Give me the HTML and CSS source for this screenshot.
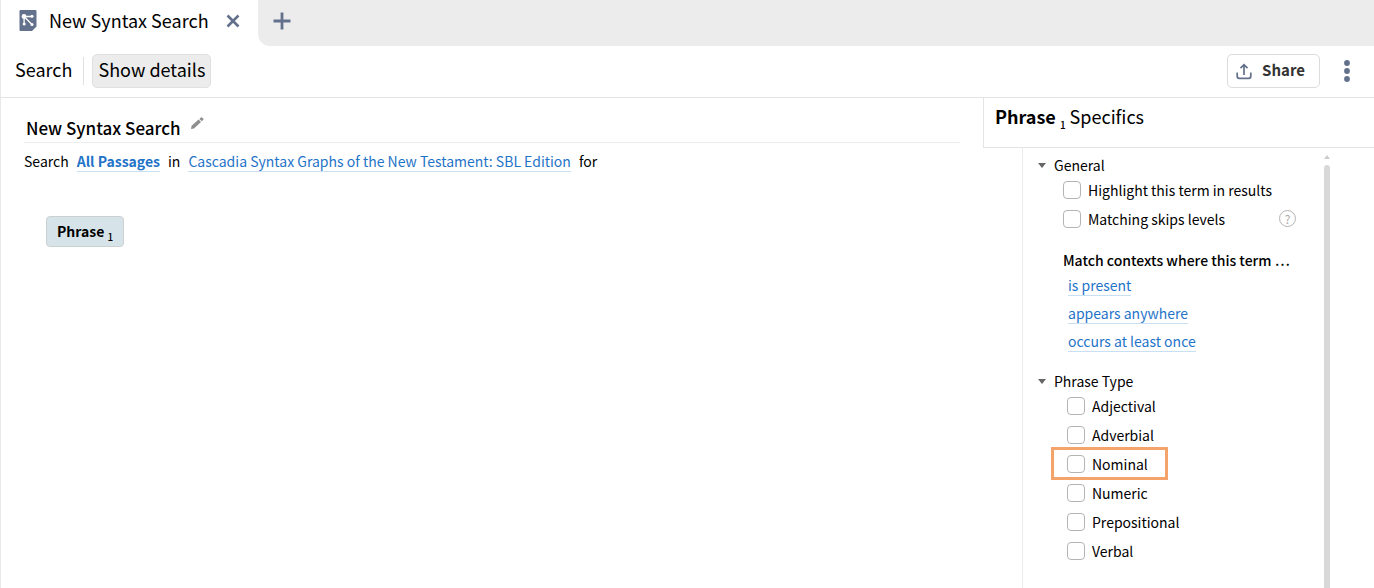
FILE: index.html
```html
<!DOCTYPE html>
<html lang="en">
<head>
  <meta charset="UTF-8">
  <meta name="viewport" content="width=device-width, initial-scale=1.0">
  <title>New Syntax Search</title>
  <link rel="stylesheet" href="styles.css">
</head>
<body>
  <header class="tabs">
    <div class="tab">
      <svg class="tab-icon" width="18" height="21" viewBox="0 0 18 21">
        <path d="M1.500 0h15a1 1 0 0 1 1 1v15.500l-4.500 4.500h-11.500a1 1 0 0 1-1-1v-19a1 1 0 0 1 1-1z" fill="#64718c"/>
        <path d="M5 6.500H13M5 6.500L5.200 14M5 6.500L13 14.500" stroke="#fff" stroke-width="1.300" fill="none"/>
        <circle cx="5" cy="6.500" r="2.400" fill="#fff"/>
        <circle cx="13" cy="6.200" r="1.500" fill="#fff"/>
        <circle cx="5.200" cy="14" r="1.500" fill="#fff"/>
        <circle cx="13" cy="14.500" r="1.500" fill="#fff"/>
      </svg>
      <span class="tab-title">New Syntax Search</span>
      <button class="icon-btn" aria-label="Close tab">
        <svg width="14" height="14" viewBox="0 0 14 14"><path d="M1.500 1.500l11 11M12.500 1.500l-11 11" stroke="#64718c" stroke-width="2.600"/></svg>
      </button>
    </div>
    <div class="tab-rest">
      <button class="icon-btn" aria-label="New tab">
        <svg width="18" height="18" viewBox="0 0 18 18"><path d="M9 .5v17M.5 9h17" stroke="#64718c" stroke-width="2.800"/></svg>
      </button>
    </div>
  </header>

  <nav class="toolbar">
    <button class="tool">Search</button>
    <button class="tool active">Show details</button>
    <button class="share">
      <svg width="16" height="18" viewBox="0 0 16 18" fill="none" stroke="#64718c" stroke-width="1.700">
        <path d="M8 13V3M4.500 6.200L8 2.700l3.500 3.500M1.200 10.500v3.800a2 2 0 0 0 2 2h9.600a2 2 0 0 0 2-2v-3.800"/>
      </svg>
      <span>Share</span>
    </button>
    <button class="icon-btn" aria-label="More">
      <svg width="6" height="22" viewBox="0 0 6 22" fill="#64718c"><circle cx="3" cy="3" r="2.900"/><circle cx="3" cy="11" r="2.900"/><circle cx="3" cy="19" r="2.900"/></svg>
    </button>
  </nav>

  <div class="panes">
    <main class="query">
      <div class="query-title">
        <h1>New Syntax Search</h1>
        <button class="icon-btn" aria-label="Rename">
          <svg width="14" height="14" viewBox="0 0 14 14" fill="#8f8f8f"><path d="M1 13l.6-3.200L8.600 3.600l2.400 2.400-7 6.400zM9.400 2.900l1.600-1.500a.8.8 0 0 1 1.100 0l1.200 1.200a.8.8 0 0 1 0 1.100l-1.500 1.600z"/></svg>
        </button>
      </div>
      <p class="query-scope">
        <span>Search</span>
        <a class="strong" href="#passages">All Passages</a>
        <span>in</span>
        <a href="#resource">Cascadia Syntax Graphs of the New Testament: SBL Edition</a>
        <span>for</span>
      </p>
      <button class="term">Phrase <sub>1</sub></button>
    </main>

    <aside class="specifics">
      <h2><b>Phrase</b> <sub>1</sub> Specifics</h2>
      <div class="specifics-body">
        <div class="options">
          <details open>
            <summary>General</summary>
            <label class="check"><input type="checkbox">Highlight this term in results</label>
            <div class="check-line">
              <label class="check"><input type="checkbox">Matching skips levels</label>
              <button class="help" aria-label="Help">?</button>
            </div>
            <h3>Match contexts where this term …</h3>
            <ul class="contexts">
              <li><a href="#present">is present</a></li>
              <li><a href="#anywhere">appears anywhere</a></li>
              <li><a href="#once">occurs at least once</a></li>
            </ul>
          </details>
          <details class="types" open>
            <summary>Phrase Type</summary>
            <label class="check"><input type="checkbox">Adjectival</label>
            <label class="check"><input type="checkbox">Adverbial</label>
            <label class="check marked"><input type="checkbox">Nominal</label>
            <label class="check"><input type="checkbox">Numeric</label>
            <label class="check"><input type="checkbox">Prepositional</label>
            <label class="check"><input type="checkbox">Verbal</label>
          </details>
        </div>
        <div class="scrollbar"><div class="thumb"></div></div>
      </div>
    </aside>
  </div>
</body>
</html>
```

FILE: styles.css
```css
* {
  box-sizing: border-box;
}
body {
  margin: 0;
  min-height: 100vh;
  display: flex;
  flex-direction: column;
  border-left: 1px solid #e8e8e8;
  font-family: "Noto Sans CJK SC", "Noto Sans", sans-serif;
  font-size: 14px;
  line-height: 20px;
  background: #fff;
  color: #000;
}
h1, h2, h3, p, ul {
  margin: 0;
  padding: 0;
}
button {
  font: inherit;
  color: inherit;
  cursor: pointer;
}
svg {
  display: block;
}
a {
  color: #1f74c8;
  text-decoration: none;
  border-bottom: 1px solid #c9dff3;
}
.icon-btn {
  padding: 0;
  border: 0;
  background: none;
}

/* tabs */
.tabs {
  display: flex;
  height: 46px;
}
.tab {
  display: flex;
  align-items: center;
  width: 257px;
  padding: 0 18px 5px 18px;
  font-size: 18px;
}
.tab-title {
  margin: 0 auto 0 12px;
  padding-bottom: 2px;
}
.tab-rest {
  flex: 1;
  display: flex;
  align-items: center;
  padding: 0 15px 5px;
  background: #ececec;
  border-bottom-left-radius: 12px;
}

/* toolbar */
.toolbar {
  display: flex;
  align-items: center;
  height: 52px;
  padding: 0 24px 2px 8px;
  border-bottom: 1px solid #e4e4e4;
}
.tool {
  height: 34px;
  padding: 0 5px 4px;
  font-size: 18px;
  border: 1px solid transparent;
  border-radius: 5px;
  background: none;
}
.tool.active {
  position: relative;
  margin-left: 14px;
  background: #ececec;
  border-color: #e0e0e0;
}
.tool.active::before {
  content: "";
  position: absolute;
  left: -10px;
  top: 2px;
  height: 28px;
  border-left: 1px solid #e0e0e0;
}
.share {
  display: flex;
  align-items: center;
  gap: 10px;
  height: 34px;
  margin: 0 24px 0 auto;
  padding: 0 14px 0 8px;
  font-size: 15px;
  font-weight: 700;
  color: #333;
  border: 1px solid #dcdcdc;
  border-radius: 5px;
  background: #fff;
}
.share span {
  padding-bottom: 2px;
}

/* panes */
.panes {
  flex: 1;
  display: flex;
}
.query {
  flex: 1;
  padding: 16px 23px;
}
.query-title {
  display: flex;
  gap: 9px;
  height: 29px;
  padding: 2px 2px 0;
  border-bottom: 1px solid #ececec;
}
.query-title .icon-btn {
  height: 14px;
}
h1 {
  padding-top: 2px;
  font-size: 17px;
  font-weight: 500;
}
.query-scope {
  display: flex;
  gap: 8px;
  padding-top: 8px;
}
.query-scope .strong {
  font-weight: 700;
}
.term {
  height: 31px;
  margin: 44px 22px;
  padding: 0 10px 2px;
  font-weight: 700;
  border: 1px solid #cbd0d3;
  border-radius: 4px;
  background: #d6e4ea;
}
sub {
  font-size: 10px;
  font-weight: 500;
  line-height: 0;
}

/* specifics panel */
.specifics {
  display: flex;
  flex-direction: column;
  width: 391px;
}
h2 {
  height: 50px;
  padding: 8px 11px;
  font-size: 18px;
  font-weight: 400;
  border-left: 1px solid #e4e4e4;
  border-bottom: 1px solid #e4e4e4;
}
.specifics-body {
  flex: 1;
  display: flex;
  margin-left: 39px;
  padding-right: 44px;
  border-left: 1px solid #ececec;
}
.options {
  flex: 1;
  padding: 7px 28px 16px 15px;
}
summary {
  display: flex;
  align-items: center;
  gap: 8px;
  cursor: pointer;
}
summary::before {
  content: "";
  border: 4px solid transparent;
  border-top: 5px solid #666;
  border-bottom: 0;
}
.check {
  display: flex;
  align-items: center;
  gap: 7px;
  height: 29px;
  margin-left: 25px;
}
.check input {
  appearance: none;
  width: 18px;
  height: 18px;
  margin: 0;
  border: 1px solid #b4b4b4;
  border-radius: 4px;
  background: #fff;
}
.check-line {
  display: flex;
  align-items: center;
  justify-content: space-between;
}
.help {
  width: 17px;
  height: 17px;
  padding: 0;
  font-size: 12px;
  line-height: 14px;
  color: #aaa;
  border: 1px solid #b4b4b4;
  border-radius: 50%;
  background: none;
}
h3 {
  margin: 16px 0 0 25px;
  font-size: 14px;
  font-weight: 500;
  line-height: 22px;
  white-space: nowrap;
}
.contexts {
  margin-left: 30px;
  list-style: none;
}
.contexts li {
  display: flex;
  align-items: center;
  height: 28px;
}
.types {
  margin-top: 16px;
}
.types .check {
  margin-left: 29px;
}
.types .marked {
  width: fit-content;
  margin-left: 15px;
  padding: 0 18px 0 14px;
  outline: 3px solid #f4a46a;
  outline-offset: -1px;
}
.scrollbar {
  display: flex;
  flex-direction: column;
  align-items: center;
  gap: 6px;
  padding-top: 7px;
}
.scrollbar::before {
  content: "";
  border: 3px solid transparent;
  border-top: 0;
  border-bottom: 4px solid #ccc;
}
.thumb {
  flex: 1;
  width: 6px;
  border-radius: 3px 3px 0 0;
  background: #d8d8d8;
}
```
